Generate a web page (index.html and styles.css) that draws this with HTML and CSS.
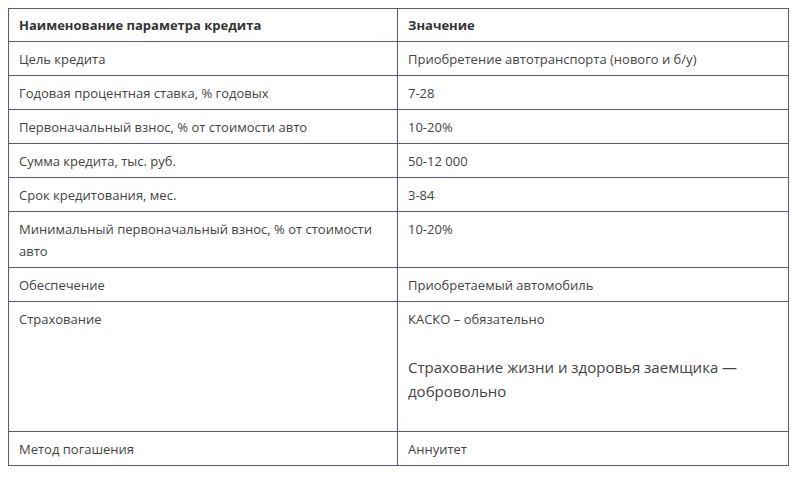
FILE: index.html
```html
<!DOCTYPE html>
<html lang="ru">
<head>
<meta charset="utf-8">
<title>Параметры кредита</title>
<link rel="stylesheet" href="styles.css">
</head>
<body>
<table class="credit">
  <thead>
    <tr><th>Наименование параметра кредита</th><th>Значение</th></tr>
  </thead>
  <tbody>
    <tr><td>Цель кредита</td><td>Приобретение автотранспорта (нового и б/у)</td></tr>
    <tr><td>Годовая процентная ставка, % годовых</td><td>7-28</td></tr>
    <tr><td>Первоначальный взнос, % от стоимости авто</td><td>10-20%</td></tr>
    <tr><td>Сумма кредита, тыс. руб.</td><td>50-12 000</td></tr>
    <tr><td>Срок кредитования, мес.</td><td>3-84</td></tr>
    <tr><td>Минимальный первоначальный взнос, % от стоимости авто</td><td>10-20%</td></tr>
    <tr><td>Обеспечение</td><td>Приобретаемый автомобиль</td></tr>
    <tr><td>Страхование</td><td>КАСКО – обязательно<p class="big">Страхование жизни и здоровья заемщика — добровольно</p></td></tr>
    <tr><td>Метод погашения</td><td>Аннуитет</td></tr>
  </tbody>
</table>
</body>
</html>
```
FILE: styles.css
```css
html, body {
  margin: 0;
  background: #ffffff;
}
body {
  padding: 8px;
  font-family: "Open Sans", "Liberation Sans", sans-serif;
  font-size: 13px;
  color: #444444;
}
.credit {
  border-collapse: collapse;
  width: 781px;
  table-layout: fixed;
}
.credit th,
.credit td {
  border: 1px solid #5a5a85;
  padding: 6px 10px 5px 10px;
  line-height: 22px;
  text-align: left;
  vertical-align: top;
}
.credit th {
  padding-top: 5px;
  font-weight: 700;
  color: #333333;
}
.credit th:first-child,
.credit td:first-child {
  width: 368px;
}
.credit .big {
  margin: 25px 0 23px;
  font-size: 15px;
  line-height: 24px;
}
```
